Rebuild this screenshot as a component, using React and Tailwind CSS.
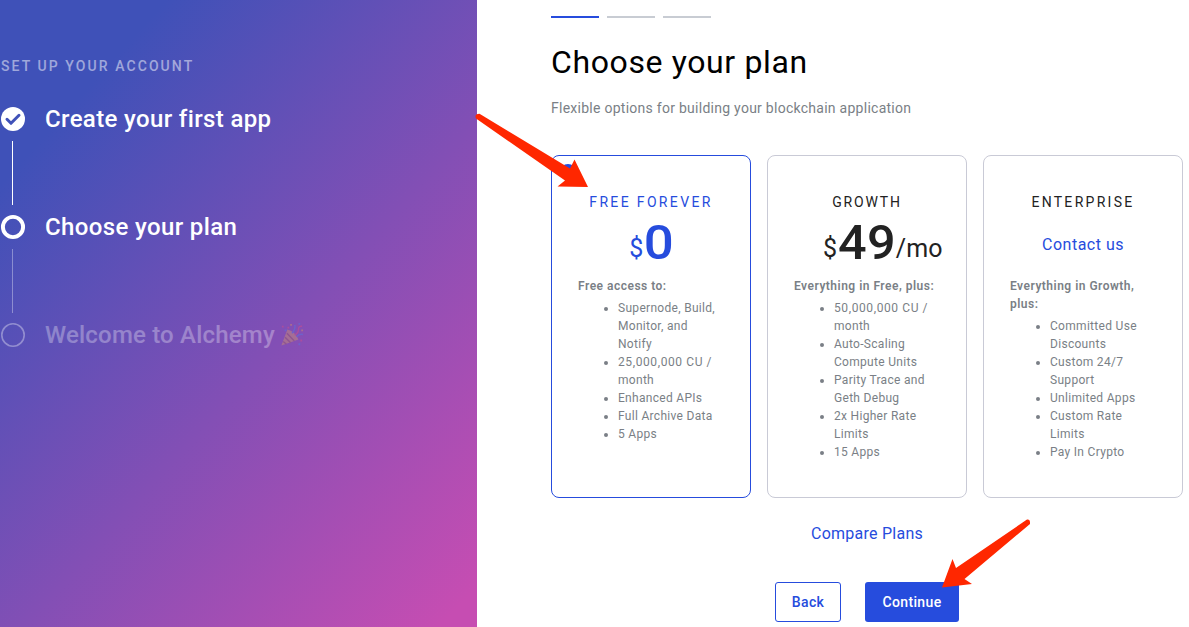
import React from "react";

const plans = [
  {
    name: "FREE FOREVER",
    tracking: "tracking-[2.35px]",
    selected: true,
    intro: ["Free access to:"],
    items: [["Supernode, Build,", "Monitor, and", "Notify"], ["25,000,000 CU /", "month"], ["Enhanced APIs"], ["Full Archive Data"], ["5 Apps"]],
  },
  {
    name: "GROWTH",
    tracking: "tracking-[1.8px]",
    intro: ["Everything in Free, plus:"],
    items: [["50,000,000 CU /", "month"], ["Auto-Scaling", "Compute Units"], ["Parity Trace and", "Geth Debug"], ["2x Higher Rate", "Limits"], ["15 Apps"]],
  },
  {
    name: "ENTERPRISE",
    tracking: "tracking-[2.3px]",
    intro: ["Everything in Growth,", "plus:"],
    items: [["Committed Use", "Discounts"], ["Custom 24/7", "Support"], ["Unlimited Apps"], ["Custom Rate", "Limits"], ["Pay In Crypto"]],
  },
];

function Lines({ lines }) {
  return lines.map((line) => (
    <span key={line} className={`block whitespace-nowrap ${line.endsWith("CU /") ? "tracking-[0.6px]" : ""}`}>{line}</span>
  ));
}

function Price({ plan }) {
  if (plan.name === "ENTERPRISE") {
    return <a className="mt-[20px] h-[48px] text-center text-[16px] leading-[24px] tracking-[0.5px] text-[#264cdd]">Contact us</a>;
  }
  if (plan.name === "GROWTH") {
    return (
      <div className="flex h-[68px] items-baseline pl-[29px] leading-[60px] text-[#222]">
        <span className="-translate-y-[2px] text-[25px] tracking-[0.8px]">$</span>
        <span className="origin-left scale-x-105 text-[48px] font-medium tracking-[0.4px]">49</span>
        <span className="-translate-y-[2px] pl-[2.5px] text-[25px] tracking-[0.1px]">/mo</span>
      </div>
    );
  }
  return (
    <div className="flex h-[68px] items-baseline justify-center leading-[60px] text-[#264cdd]">
      <span className="-translate-y-[2px] pr-[1px] text-[25px] tracking-[1px]">$</span>
      <span className="origin-center scale-x-110 text-[48px] font-medium">0</span>
    </div>
  );
}

function PlanCard({ plan }) {
  return (
    <section className={`flex h-[343px] w-[200px] flex-col rounded-[8px] border px-[26px] pt-[36px] ${plan.selected ? "border-[#264cdd]" : "border-[#c9cad6]"}`}>
      <h2 className={`-mx-3 text-center text-[14px] leading-[21px] ${plan.tracking} ${plan.selected ? "text-[#264cdd]" : "text-[#222]"}`}>{plan.name}</h2>
      <Price plan={plan} />
      <div className="mt-[-5px] text-[12px] leading-[18px] text-[#7a7f86]">
        <div className="mt-px font-semibold tracking-[0.49px]"><Lines lines={plan.intro} /></div>
        <ul className="mt-[4px] list-disc pl-[40px] tracking-[0.3px]">
          {plan.items.map((item) => (
            <li key={item[0]}><Lines lines={item} /></li>
          ))}
        </ul>
      </div>
    </section>
  );
}

function PartyPopper() {
  return (
    <svg width="24" height="24" viewBox="0 0 26 26" fill="none">
      <path d="M1.500 24.500L8 7Q16 9 20 18Z" fill="#f3b64c" />
      <path d="M5.500 15.500L11.500 21.500M3.500 20L7 23M7.500 11L15.500 19.500" stroke="#a8643c" strokeWidth="1.600" />
      <path d="M13 11Q17 7 16 2M18 15Q21 11 25 12.500" stroke="#3c8dff" strokeWidth="1.600" />
      <path d="M16 13Q20 11 20 7T24 3.500" stroke="#ff4d6d" strokeWidth="1.600" />
      <path d="M2 3h2v2H2zM8 4h2v2H8zM22 18h2v2h-2z" fill="#ff4d6d" />
      <path d="M5 7h2v2H5zM20 0h2v2h-2zM20 22h2v2h-2z" fill="#3c8dff" />
      <path d="M11 1h2v2h-2zM23 7h2v2h-2z" fill="#ffb13d" />
    </svg>
  );
}

function Sidebar() {
  return (
    <aside className="flex h-full w-[477px] shrink-0 flex-col bg-linear-[132deg,#3f51b8_16%,#c64db2_96.5%] pt-[56px] text-white">
      <h2 className="pl-px text-[14px] leading-[21px] font-medium tracking-[2.08px] text-white/50">SET UP YOUR ACCOUNT</h2>
      <ol className="mt-[24px] text-[24px] leading-[36px] font-medium">
        <li className="flex h-[108px] gap-[19px]">
          <div className="w-[26px] pt-[5px]">
            <svg className="block" width="26" height="26" viewBox="0 0 26 26" fill="none">
              <circle cx="13" cy="13" r="12" fill="#fff" />
              <path d="M7 13.300l4 4 8-8" stroke="#4052b8" strokeWidth="3" strokeLinecap="round" strokeLinejoin="round" />
            </svg>
            <div className="mt-[9px] ml-[12px] h-[64px] w-px bg-white" />
          </div>
          <span className="tracking-[0.36px]">Create your first app</span>
        </li>
        <li className="flex h-[108px] gap-[19px]">
          <div className="w-[26px] pt-[5px]">
            <svg className="block" width="26" height="26" viewBox="0 0 26 26" fill="none">
              <circle cx="13" cy="13" r="10.100" stroke="#fff" strokeWidth="3.900" />
            </svg>
            <div className="mt-[9px] ml-[12px] h-[64px] w-px bg-white/35" />
          </div>
          <span className="tracking-[0.37px]">Choose your plan</span>
        </li>
        <li className="flex gap-[19px]">
          <div className="w-[26px] pt-[5px] opacity-35">
            <svg className="block" width="26" height="26" viewBox="0 0 26 26" fill="none">
              <circle cx="13" cy="13" r="11.200" stroke="#fff" strokeWidth="1.600" />
            </svg>
          </div>
          <span className="flex items-center gap-[5px] tracking-[0.2px] opacity-30">Welcome to Alchemy <PartyPopper /></span>
        </li>
      </ol>
    </aside>
  );
}

export default function App() {
  return (
    <div className="relative flex h-[627px] w-[1189px] overflow-hidden bg-white font-[Roboto,sans-serif]">
      <Sidebar />
      <main className="flex flex-col pt-[16px] pl-[74px]">
        <div className="flex gap-[8px]">
          <div className="h-[2px] w-[48px] bg-[#264cdd]" />
          <div className="h-[2px] w-[48px] bg-[#c8ccd3]" />
          <div className="h-[2px] w-[48px] bg-[#c8ccd3]" />
        </div>
        <h1 className="mt-[20px] text-[32px] leading-[48px] tracking-[0.62px] text-black">Choose your plan</h1>
        <p className="mt-[12px] text-[14px] leading-[21px] tracking-[0.265px] text-[#7a7f86]">Flexible options for building your blockchain application</p>
        <div className="mt-[36px] flex gap-[16px]">
          {plans.map((plan) => <PlanCard key={plan.name} plan={plan} />)}
        </div>
        <a className="mt-[24px] text-center text-[16px] leading-[24px] tracking-[0.25px] text-[#264cdd]">Compare Plans</a>
        <div className="mt-[36px] flex justify-center gap-[24px] text-[14px] font-medium tracking-[0.35px]">
          <button className="h-[40px] w-[66px] rounded-[3px] border border-[#264cdd] text-[#264cdd]">Back</button>
          <button className="h-[40px] w-[94px] rounded-[3px] bg-[#264cdd] text-white">Continue</button>
        </div>
      </main>
      <svg className="absolute inset-0" width="1189" height="627" fill="none">
        <circle cx="568" cy="172" r="8" fill="#264cdd" />
        <path d="M479.500 113.800L570 168.500L574.500 159.500L588 187L557.500 186.500L565 180.500L476 118.500Q474 114 479.500 113.800Z" fill="#ff2700" />
        <path d="M1027 519.500L956 568L952.500 559L942 587.500L972 584L964.500 579L1030 524Q1030.500 519 1027 519.500Z" fill="#ff2700" />
      </svg>
    </div>
  );
}
